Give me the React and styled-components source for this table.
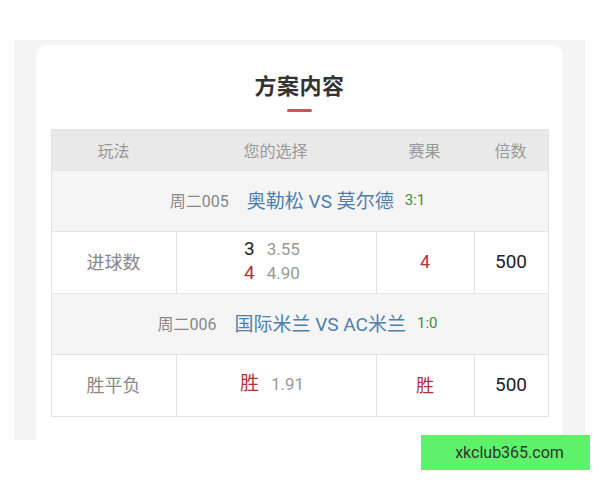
import React from 'react';
import styled, { createGlobalStyle } from 'styled-components';

const GlobalStyle = createGlobalStyle`
    body {
        margin: 0;
        background: #fff;
        font-family: Roboto, "Noto Sans CJK SC", sans-serif;
    }
`;

const Page = styled.div`
    position: relative;
    width: 600px;
    height: 480px;
    padding: 40px 0 0 14px;
    box-sizing: border-box;
`;

const Panel = styled.div`
    width: 571px;
    height: 400px;
    background: #f4f4f4;
    padding: 5px 22px 0 22px;
    box-sizing: border-box;
`;

const Card = styled.div`
    background: #fff;
    height: 100%;
    border-radius: 12px 12px 0 0;
    padding: 0 15px;
    box-sizing: border-box;
    display: flex;
    flex-direction: column;
    align-items: center;
`;

const Title = styled.h2`
    margin: 27px 0 0;
    font-size: 22px;
    font-weight: 700;
    color: #333;
    line-height: 30px;
    letter-spacing: 0.5px;
`;

const TitleBar = styled.div`
    width: 25px;
    height: 3px;
    border-radius: 2px;
    background: #c9565a;
    margin: 7px 0 17px;
`;

const Table = styled.div`
    width: 496px;
    border: 1px solid #e2e2e2;
    display: grid;
    grid-template-columns: 124px 200px 98px 1fr;
`;

const HeadCell = styled.div`
    height: 40px;
    background: #e9e9e9;
    color: #999;
    font-size: 16px;
    display: flex;
    align-items: center;
    justify-content: center;
`;

const MatchRow = styled.div`
    grid-column: 1 / -1;
    height: 61px;
    box-sizing: border-box;
    background: #f5f5f5;
    border-top: 1px solid #e6e6e6;
    display: flex;
    align-items: center;
    justify-content: center;
    gap: 11px;
    padding: 0 4px 3px 0;
`;

const MatchNo = styled.span`
    color: #888;
    font-size: 16px;
    margin-right: 7px;
`;

const Teams = styled.span`
    color: #4d80ad;
    font-size: 19px;
`;

const Score = styled.span`
    color: #3f8a3c;
    font-size: 15px;
`;

const Cell = styled.div`
    height: 62px;
    box-sizing: border-box;
    padding-bottom: 3px;
    background: #fff;
    border-top: 1px solid #e2e2e2;
    border-left: ${props => props.first ? 'none' : '1px solid #e2e2e2'};
    display: flex;
    flex-direction: column;
    align-items: center;
    justify-content: center;
    font-size: ${props => props.size || 18}px;
    color: ${props => props.color || '#333'};
`;

const Pick = styled.div`
    display: flex;
    align-items: baseline;
    gap: 12px;
    line-height: 24px;
    margin-right: 8px;
`;

const PickValue = styled.span`
    font-size: 19px;
    color: ${props => props.win ? '#b3313a' : '#222'};
`;

const Odds = styled.span`
    font-size: 17px;
    color: #999;
`;

const Watermark = styled.div`
    position: absolute;
    left: 421px;
    top: 435px;
    width: 169px;
    height: 35px;
    background: #5df26a;
    color: #333;
    font-size: 16px;
    display: flex;
    align-items: center;
    justify-content: center;
    padding-left: 8px;
    box-sizing: border-box;
`;

const matches = [
    {
        no: '周二005',
        teams: '奥勒松 VS 莫尔德',
        score: '3:1',
        play: '进球数',
        picks: [
            { value: '3', odds: '3.55', win: false },
            { value: '4', odds: '4.90', win: true },
        ],
        result: '4',
        times: '500',
    },
    {
        no: '周二006',
        teams: '国际米兰 VS AC米兰',
        score: '1:0',
        play: '胜平负',
        picks: [{ value: '胜', odds: '1.91', win: true }],
        result: '胜',
        times: '500',
    },
];

const App = () => (
    <Page>
        <GlobalStyle />
        <Panel>
            <Card>
                <Title>方案内容</Title>
                <TitleBar />
                <Table>
                    <HeadCell>玩法</HeadCell>
                    <HeadCell>您的选择</HeadCell>
                    <HeadCell>赛果</HeadCell>
                    <HeadCell>倍数</HeadCell>
                    {matches.map((m, i) => (
                        <React.Fragment key={i}>
                            <MatchRow>
                                <MatchNo>{m.no}</MatchNo>
                                <Teams>{m.teams}</Teams>
                                <Score>{m.score}</Score>
                            </MatchRow>
                            <Cell first color="#888">{m.play}</Cell>
                            <Cell>
                                {m.picks.map((p, j) => (
                                    <Pick key={j}>
                                        <PickValue win={p.win}>{p.value}</PickValue>
                                        <Odds>{p.odds}</Odds>
                                    </Pick>
                                ))}
                            </Cell>
                            <Cell color="#b3313a">{m.result}</Cell>
                            <Cell color="#222" size={19}>{m.times}</Cell>
                        </React.Fragment>
                    ))}
                </Table>
            </Card>
        </Panel>
        <Watermark>xkclub365.com</Watermark>
    </Page>
);

export default App;
